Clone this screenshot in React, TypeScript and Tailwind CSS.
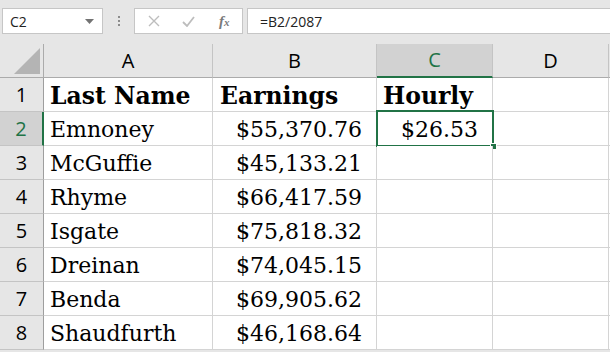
import React from 'react';

const rows = [
  { name: 'Emnoney', earn: '$55,370.76', hourly: '$26.53' },
  { name: 'McGuffie', earn: '$45,133.21' },
  { name: 'Rhyme', earn: '$66,417.59' },
  { name: 'Isgate', earn: '$75,818.32' },
  { name: 'Dreinan', earn: '$74,045.15' },
  { name: 'Benda', earn: '$69,905.62' },
  { name: 'Shaudfurth', earn: '$46,168.64' },
];

const ui = { fontFamily: '"Open Sans", "Noto Sans", sans-serif' };
const serif = { fontFamily: '"DejaVu Serif", "Liberation Serif", serif' };

function HeaderCell({ label, active }: { label?: string; active?: boolean }) {
  return (
    <div
      className={`h-[34px] flex items-center justify-center border-r border-[#c4c4c4] text-[20px] ${
        active ? 'bg-[#d2d2d2] text-[#217346] border-b-2 border-b-[#217346]' : 'border-b border-b-[#ababab] text-black'
      }`}
      style={ui}
    >
      {label}
    </div>
  );
}

function RowHead({ n, active }: { n: number; active?: boolean }) {
  return (
    <div
      className={`h-[34px] flex items-center justify-center border-b border-[#c4c4c4] text-[20px] ${
        active ? 'bg-[#d2d2d2] text-[#217346] border-r-2 border-r-[#217346]' : 'border-r border-r-[#9e9e9e] text-black'
      }`}
      style={ui}
    >
      {n}
    </div>
  );
}

function Cell({ children, right, bold, className = '' }: { children?: React.ReactNode; right?: boolean; bold?: boolean; className?: string }) {
  return (
    <div
      className={`h-[34px] bg-white border-r border-b border-[#d4d4d4] flex items-start pt-[7px] leading-none text-black whitespace-nowrap ${
        right ? 'justify-end pr-[14px]' : 'pl-[6px]'
      } ${bold ? 'font-bold text-[23.5px]' : 'text-[22px]'} ${className}`}
      style={serif}
    >
      {children}
    </div>
  );
}

export default function App() {
  return (
    <div className="w-[610px] h-[352px] overflow-hidden bg-[#e6e6e6] select-none">
      {/* formula bar */}
      <div className="h-[44px] flex items-start pt-[8px] w-[700px]">
        <div className="ml-[2px] w-[101px] h-[26px] bg-white border border-[#c6c6c6] flex items-center justify-between pl-[7px] pr-[8px]">
          <span className="text-[14px] text-[#222]" style={ui}>C2</span>
          <svg width="9" height="5" viewBox="0 0 9 5"><path d="M0 0h9L4.5 5z" fill="#737373" /></svg>
        </div>
        <div className="w-[31px] h-[26px] flex flex-col items-center justify-center gap-[2px]">
          <span className="w-[2px] h-[2px] bg-[#8c8c8c]" />
          <span className="w-[2px] h-[2px] bg-[#8c8c8c]" />
          <span className="w-[2px] h-[2px] bg-[#8c8c8c]" />
        </div>
        <div className="w-[109px] h-[26px] bg-white border border-[#c6c6c6] flex items-center">
          <svg className="ml-[13px]" width="12" height="12" viewBox="0 0 12 12">
            <path d="M1 1l10 10M11 1L1 11" stroke="#bdbdbd" strokeWidth="1.4" />
          </svg>
          <svg className="ml-[22px]" width="13" height="11" viewBox="0 0 13 11">
            <path d="M1 6l4 4 7-9" stroke="#bdbdbd" strokeWidth="1.8" fill="none" />
          </svg>
          <span className="ml-[24px] text-[15px] italic font-bold text-[#7a7a7a]" style={{ fontFamily: '"Liberation Serif", serif' }}>
            f<span className="text-[11px]">x</span>
          </span>
        </div>
        <div className="ml-[4px] flex-1 h-[26px] bg-white border border-[#c6c6c6] flex items-center pl-[12px]">
          <span className="text-[14px] text-[#222]" style={ui}>=B2/2087</span>
        </div>
      </div>

      {/* sheet */}
      <div className="grid grid-cols-[44px_169px_164px_116px_116px_40px] w-[649px]">
        <div className="h-[34px] border-r border-b border-[#ababab] flex items-end justify-end pr-[3px] pb-[3px]">
          <svg width="26" height="26" viewBox="0 0 26 26"><path d="M26 0V26H0z" fill="#b4b4b4" /></svg>
        </div>
        <HeaderCell label="A" />
        <HeaderCell label="B" />
        <HeaderCell label="C" active />
        <HeaderCell label="D" />
        <HeaderCell />

        <RowHead n={1} />
        <Cell bold>Last Name</Cell>
        <Cell bold className="pl-[7px]">Earnings</Cell>
        <Cell bold>Hourly</Cell>
        <Cell />
        <Cell />

        {rows.map((r, i) => (
          <React.Fragment key={r.name}>
            <RowHead n={i + 2} active={i === 0} />
            <Cell>{r.name}</Cell>
            <Cell right>{r.earn}</Cell>
            <div className="relative">
              <Cell right>{r.hourly}</Cell>
              {i === 0 && (
                <>
                  <div className="absolute -top-[2px] -left-[1px] -right-[1px] -bottom-[1px] border-2 border-[#217346] pointer-events-none" />
                  <div className="absolute -right-[4px] -bottom-[4px] w-[7px] h-[7px] bg-[#217346] border border-white" />
                </>
              )}
            </div>
            <Cell />
            <Cell />
          </React.Fragment>
        ))}
      </div>
    </div>
  );
}
